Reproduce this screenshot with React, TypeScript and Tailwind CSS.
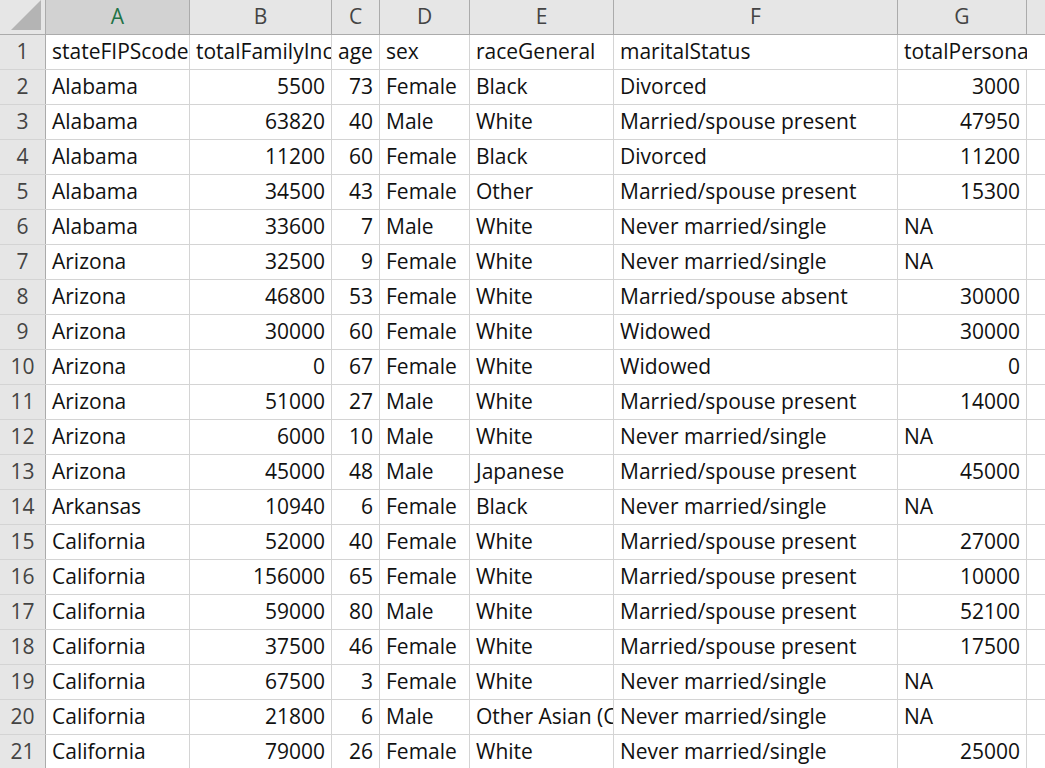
const cols = [
  { l: "A", w: 144 }, { l: "B", w: 142 }, { l: "C", w: 48 }, { l: "D", w: 90 },
  { l: "E", w: 144 }, { l: "F", w: 284 }, { l: "G", w: 129 }, { l: "H", w: 100 },
];
const data: (string)[][] = [
  ["stateFIPScode", "totalFamilyIncome", "age", "sex", "raceGeneral", "maritalStatus", "totalPersonalIncome"],
  ["Alabama","5500","73","Female","Black","Divorced","3000"],
  ["Alabama","63820","40","Male","White","Married/spouse present","47950"],
  ["Alabama","11200","60","Female","Black","Divorced","11200"],
  ["Alabama","34500","43","Female","Other","Married/spouse present","15300"],
  ["Alabama","33600","7","Male","White","Never married/single","NA"],
  ["Arizona","32500","9","Female","White","Never married/single","NA"],
  ["Arizona","46800","53","Female","White","Married/spouse absent","30000"],
  ["Arizona","30000","60","Female","White","Widowed","30000"],
  ["Arizona","0","67","Female","White","Widowed","0"],
  ["Arizona","51000","27","Male","White","Married/spouse present","14000"],
  ["Arizona","6000","10","Male","White","Never married/single","NA"],
  ["Arizona","45000","48","Male","Japanese","Married/spouse present","45000"],
  ["Arkansas","10940","6","Female","Black","Never married/single","NA"],
  ["California","52000","40","Female","White","Married/spouse present","27000"],
  ["California","156000","65","Female","White","Married/spouse present","10000"],
  ["California","59000","80","Male","White","Married/spouse present","52100"],
  ["California","37500","46","Female","White","Married/spouse present","17500"],
  ["California","67500","3","Female","White","Never married/single","NA"],
  ["California","21800","6","Male","Other Asian (Chinese)","Never married/single","NA"],
  ["California","79000","26","Female","White","Never married/single","25000"],
];
const isNum = (s: string) => /^\d+$/.test(s);

export default function App() {
  return (
    <div className="w-[1045px] h-[768px] overflow-hidden bg-white text-[21px] text-[#111]" style={{ fontFamily: "'Open Sans', sans-serif" }}>
      <div className="flex h-[35px] bg-[#e6e6e6] border-b border-[#ababab]">
        <div className="w-[46px] shrink-0 border-r border-[#ababab] relative">
          <div className="absolute right-[4px] bottom-[4px] w-0 h-0 border-l-[30px] border-l-transparent border-b-[30px] border-b-[#b4b4b4]" />
        </div>
        {cols.map((c, i) => (
          <div key={c.l} style={{ width: c.w }} className={`shrink-0 flex items-center justify-center border-r border-[#ababab] text-[21px] ${i === 0 ? "bg-[#d2d2d2] text-[#217346]" : "text-[#444]"}`}>{c.l}</div>
        ))}
      </div>
      {data.map((row, r) => (
        <div key={r} className="flex h-[35px] border-b border-[#d4d4d4]">
          <div className="w-[46px] shrink-0 bg-[#e6e6e6] border-r border-[#ababab] flex items-center justify-center text-[21px] text-[#444]">{r + 1}</div>
          {cols.map((c, i) => {
            const v = row[i] ?? "";
            const over = r === 0 && i === 6;
            return (
              <div key={c.l} style={{ width: c.w }} className={`shrink-0 flex items-center px-[6px] whitespace-nowrap overflow-hidden ${over ? "" : "border-r border-[#d4d4d4]"} ${isNum(v) && r > 0 ? "justify-end" : ""}`}>
                <span className={over ? "w-[200px] shrink-0" : ""}>{v}</span>
              </div>
            );
          })}
        </div>
      ))}
    </div>
  );
}
